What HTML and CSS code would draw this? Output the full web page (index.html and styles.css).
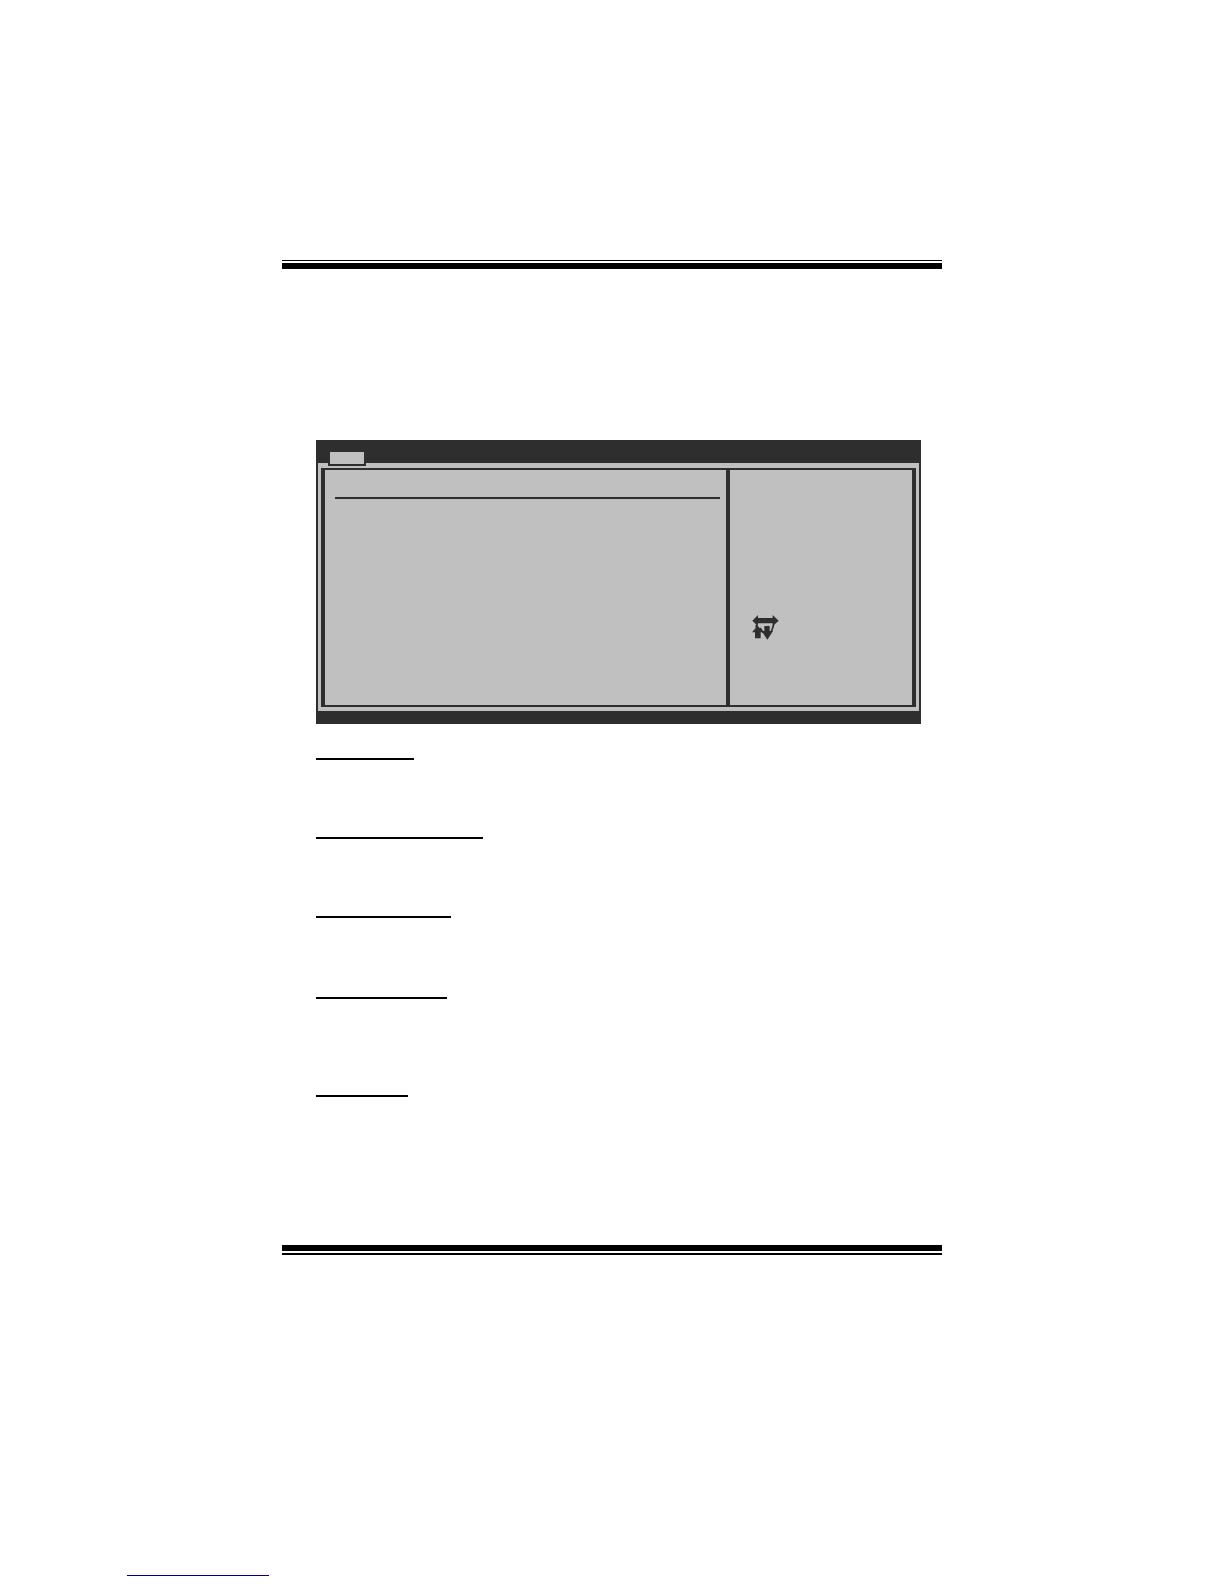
FILE: index.html
```
<!DOCTYPE html>
<html lang="en">
<head>
    <meta charset="UTF-8">
    <meta name="viewport" content="width=device-width, initial-scale=1.0">
    <link rel="stylesheet" href="styles.css">
</head>
<body>
    <main class="page">
        <hr class="rule rule-top">

        <div class="screen">
            <div class="menu-bar">
                <div class="tab"></div>
            </div>
            <div class="screen-body">
                <div class="options">
                    <hr class="options-line">
                </div>
                <div class="help">
                    <!-- arrow keys -->
                    <svg class="keys" viewBox="36 45 81 75" aria-hidden="true">
                        <path d="M37 62 L54 45 V54 H98 V45 L116 62 L98 79 V70 H54 V79 Z"/>
                        <path d="M53 77 L70 97 H62 V115 H45 V97 H36 Z"/>
                        <path d="M73 78 H89 V93 H99 L82 119 L65 93 H73 Z"/>
                        <path class="link" d="M49 74 V84 M101 74 L94 95 M60 84 L70 98"/>
                        <path class="joint" d="M74 55 V70"/>
                    </svg>
                </div>
            </div>
            <div class="status-bar"></div>
        </div>

        <section class="item"><hr class="underline main-menu"></section>
        <section class="item"><hr class="underline bios-info"></section>
        <section class="item item-tall"><hr class="underline memory"></section>
        <section class="item item-taller"><hr class="underline date"></section>
        <section class="item item-last"><hr class="underline time"></section>

        <hr class="rule rule-bottom">
    </main>

    <footer class="footer">
        <a class="footer-link" href="#"></a>
    </footer>
</body>
</html>
```
FILE: styles.css
```
* {
    box-sizing: border-box;
}

body {
    margin: 0;
    background-color: #ffffff;
    font-family: "Liberation Sans", Arial, sans-serif;
}

hr {
    margin: 0;
    border: 0;
}

.page {
    max-width: 660px;
    margin: 0 auto;
    padding-top: 260px;
}

.rule {
    border-style: solid;
    border-color: #000000;
}

.rule-top {
    height: 9px;
    border-width: 1px 0 6px;
}

.rule-bottom {
    height: 10px;
    border-width: 6px 0 2px;
}

/* setup screen */
.screen {
    margin: 171px 21px 34px 34px;
    background-color: #c0c0c0;
    border: solid #2e2e2e;
    border-width: 0 2px;
}

.menu-bar {
    height: 23px;
    padding: 10px 10px 0;
    background-color: #2e2e2e;
}

.tab {
    width: 38px;
    height: 16px;
    background-color: #c0c0c0;
    border: 2px solid #2e2e2e;
}

.screen-body {
    display: flex;
    min-height: 239px;
    margin: 5px 3px 4px;
    border: solid #2e2e2e;
    border-width: 2px 4px;
}

.options {
    flex: 1;
    padding: 27px 6px 0 10px;
}

.options-line {
    height: 2px;
    background-color: #2e2e2e;
}

.help {
    width: 186px;
    padding: 145px 22px 0;
    border-left: 4px solid #2e2e2e;
}

.keys {
    display: block;
    width: 27px;
    height: 25px;
    fill: #2e2e2e;
}

.keys .link {
    fill: none;
    stroke: #2e2e2e;
    stroke-width: 5;
}

.keys .joint {
    stroke: #444444;
    stroke-width: 2;
}

.status-bar {
    height: 13px;
    background-color: #2e2e2e;
}

/* headings below the screen */
.item {
    padding-bottom: 77px;
    padding-left: 34px;
}

.item-tall {
    padding-bottom: 79px;
}

.item-taller {
    padding-bottom: 96px;
}

.item-last {
    padding-bottom: 148px;
}

.underline {
    height: 2px;
    background-color: #000000;
}

.main-menu {
    width: 98px;
}

.bios-info {
    width: 167px;
}

.memory {
    width: 135px;
}

.date {
    width: 131px;
}

.time {
    width: 92px;
}

.footer {
    padding: 320px 0 8px 127px;
}

.footer-link {
    display: block;
    width: 142px;
    border-bottom: 1px solid #000080;
}
```
